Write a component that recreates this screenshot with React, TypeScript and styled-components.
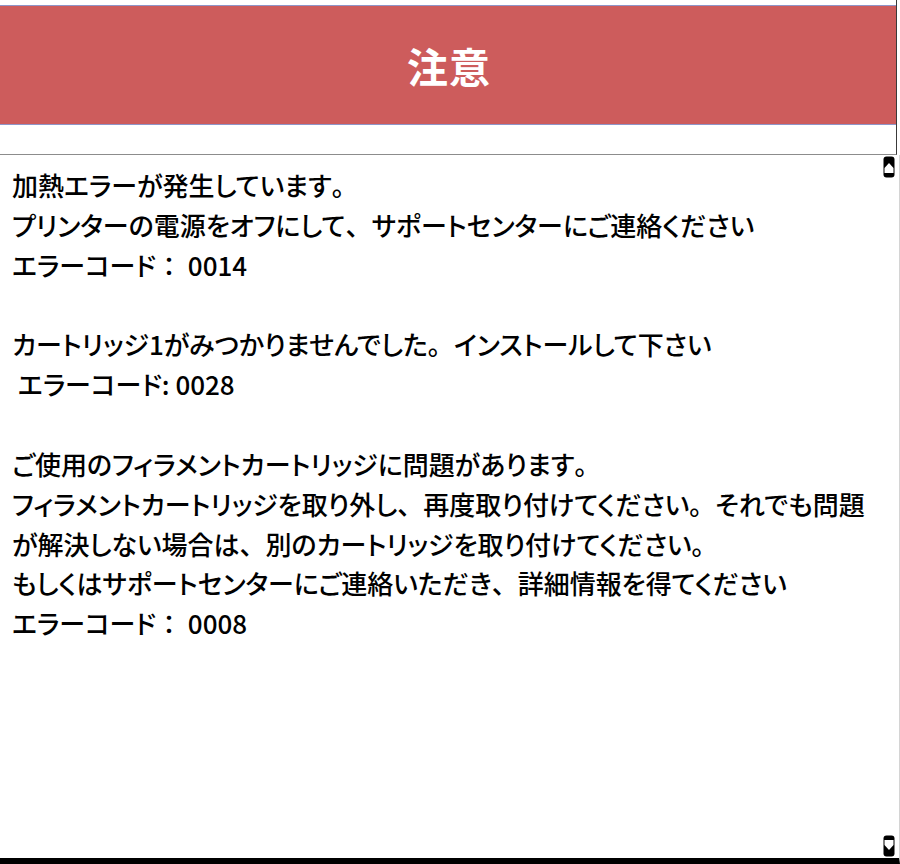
import React from "react";
import styled, { createGlobalStyle } from "styled-components";

const GlobalStyle = createGlobalStyle`
  html, body {
    margin: 0;
    padding: 0;
    background: #ffffff;
  }
  body {
    font-family: "Noto Sans CJK JP", "Noto Sans", sans-serif;
  }
`;

const messages: string[][] = [
  [
    "加熱エラーが発生しています。",
    "プリンターの電源をオフにして、サポートセンターにご連絡ください",
    "エラーコード： 0014",
  ],
  ["カートリッジ1がみつかりませんでした。インストールして下さい", " エラーコード: 0028"],
  [
    "ご使用のフィラメントカートリッジに問題があります。",
    "フィラメントカートリッジを取り外し、再度取り付けてください。それでも問題",
    "が解決しない場合は、別のカートリッジを取り付けてください。",
    "もしくはサポートセンターにご連絡いただき、詳細情報を得てください",
    "エラーコード： 0008",
  ],
];

// full-width punctuation keeps its full em box, the rest is set proportional
function MessageLine({ text }: { text: string }) {
  const parts = text.split(/([、。：])/);
  return (
    <Line>
      {parts.map((part, i) =>
        /^[、。：]$/.test(part) ? <Punct key={i}>{part}</Punct> : part
      )}
    </Line>
  );
}

export default function App() {
  return (
    <Page>
      <GlobalStyle />
      <Header>
        <Banner>
          <Title>注意</Title>
        </Banner>
      </Header>
      <MessagePane>
        {messages.map((block, i) => (
          <Block key={i}>
            {block.map((line, j) => (
              <MessageLine key={j} text={line} />
            ))}
          </Block>
        ))}
        <ScrollButton $dir="up" />
        <ScrollButton $dir="down" />
      </MessagePane>
    </Page>
  );
}

// scroll arrow: black rounded box with a white arrow inside
function ScrollButton({ $dir }: { $dir: "up" | "down" }) {
  return (
    <ArrowBox $dir={$dir}>
      <svg width="12" height="22" viewBox="0 0 12 22">
        <rect x="0.5" y="0.5" width="11" height="21" rx="3" fill="#000" />
        <path
          d={$dir === "up" ? "M6 7 L10.5 12 V17 H1.5 V12 Z" : "M6 15 L10.5 10 V5 H1.5 V10 Z"}
          fill="#fff"
        />
      </svg>
    </ArrowBox>
  );
}

const Page = styled.div`
  width: 900px;
  height: 864px;
  display: flex;
  flex-direction: column;
  overflow: hidden;
`;

const Header = styled.div`
  width: 897px;
  height: 155px;
  box-sizing: border-box;
  padding-top: 5px;
  border-right: 1px solid #3a3a3a;
  border-bottom: 1px solid #8c8c8c;
`;

const Banner = styled.div`
  height: 120px;
  box-sizing: border-box;
  background: #cd5c5c;
  border-top: 1px solid #8f95c8;
  border-bottom: 1px solid #8f95c8;
  display: flex;
  align-items: center;
  justify-content: center;
`;

const Title = styled.h1`
  margin: 0;
  color: #ffffff;
  font-size: 41px;
  font-weight: 700;
  letter-spacing: 1px;
  padding-left: 2px;
`;

const MessagePane = styled.div`
  position: relative;
  flex: 1;
  box-sizing: border-box;
  padding: 10px 12px 0 12px;
  border-right: 1px solid #d4d4d4;
  border-bottom: 6px solid #000;
  display: flex;
  flex-direction: column;
  gap: 40px;
`;

const Block = styled.div`
  display: flex;
  flex-direction: column;
`;

const Line = styled.div`
  font-size: 26px;
  line-height: 39.8px;
  font-weight: 500;
  color: #000;
  white-space: pre;
  font-feature-settings: "palt";
`;

const Punct = styled.span`
  font-feature-settings: normal;
`;

const ArrowBox = styled.div<{ $dir: "up" | "down" }>`
  position: absolute;
  right: 4px;
  ${(p) => (p.$dir === "up" ? "top: 1px;" : "bottom: 1px;")}
  width: 12px;
  height: 22px;
  line-height: 0;
`;
